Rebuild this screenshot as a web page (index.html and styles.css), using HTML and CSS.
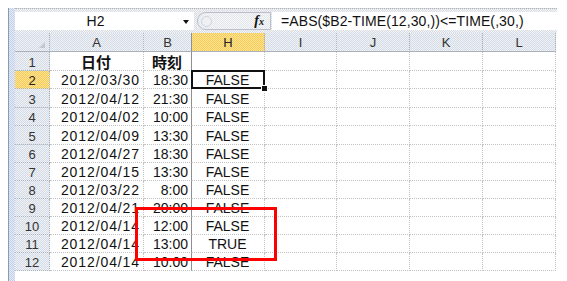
FILE: index.html
```html
<!DOCTYPE html>
<html lang="ja">
<head>
  <meta charset="UTF-8">
  <meta name="viewport" content="width=device-width, initial-scale=1.0">
  <title>ABS と TIME で時刻を判定</title>
  <link rel="stylesheet" href="styles.css">
</head>
<body>
  <div class="window">
    <div class="frame-edge"></div>
    <div class="workbook">
      <div class="formula-bar">
        <div class="name-box">
          <span class="name">H2</span>
          <span class="drop"></span>
        </div>
        <div class="fx-box">
          <span class="btn-dot"></span>
          <span class="fx">f<span class="fx-x">x</span></span>
        </div>
        <div class="formula">=ABS($B2-TIME(12,30,))&lt;=TIME(,30,)</div>
      </div>

      <div class="sheet">
        <div class="hd corner"><span class="tri"></span></div>
        <div class="hd">A</div>
        <div class="hd hidden-after">B</div>
        <div class="hd sel">H</div>
        <div class="hd">I</div>
        <div class="hd">J</div>
        <div class="hd">K</div>
        <div class="hd">L</div>

        <div class="rh">1</div>
        <div class="c mid jp">日付</div>
        <div class="c mid jp hidden-after">時刻</div>
        <div class="c"></div><div class="c"></div><div class="c"></div><div class="c"></div><div class="c"></div>

        <div class="rh sel">2</div>
        <div class="c num date">2012/03/30</div>
        <div class="c num hidden-after">18:30</div>
        <div class="c mid active">FALSE</div>
        <div class="c"></div><div class="c"></div><div class="c"></div><div class="c"></div>

        <div class="rh">3</div>
        <div class="c num date">2012/04/12</div>
        <div class="c num hidden-after">21:30</div>
        <div class="c mid">FALSE</div>
        <div class="c"></div><div class="c"></div><div class="c"></div><div class="c"></div>

        <div class="rh">4</div>
        <div class="c num date">2012/04/02</div>
        <div class="c num hidden-after">10:00</div>
        <div class="c mid">FALSE</div>
        <div class="c"></div><div class="c"></div><div class="c"></div><div class="c"></div>

        <div class="rh">5</div>
        <div class="c num date">2012/04/09</div>
        <div class="c num hidden-after">13:30</div>
        <div class="c mid">FALSE</div>
        <div class="c"></div><div class="c"></div><div class="c"></div><div class="c"></div>

        <div class="rh">6</div>
        <div class="c num date">2012/04/27</div>
        <div class="c num hidden-after">18:30</div>
        <div class="c mid">FALSE</div>
        <div class="c"></div><div class="c"></div><div class="c"></div><div class="c"></div>

        <div class="rh">7</div>
        <div class="c num date">2012/04/15</div>
        <div class="c num hidden-after">13:30</div>
        <div class="c mid">FALSE</div>
        <div class="c"></div><div class="c"></div><div class="c"></div><div class="c"></div>

        <div class="rh">8</div>
        <div class="c num date">2012/03/22</div>
        <div class="c num hidden-after">8:00</div>
        <div class="c mid">FALSE</div>
        <div class="c"></div><div class="c"></div><div class="c"></div><div class="c"></div>

        <div class="rh">9</div>
        <div class="c num date">2012/04/21</div>
        <div class="c num hidden-after">20:00</div>
        <div class="c mid">FALSE</div>
        <div class="c"></div><div class="c"></div><div class="c"></div><div class="c"></div>

        <div class="rh">10</div>
        <div class="c num date">2012/04/14</div>
        <div class="c num hidden-after">12:00</div>
        <div class="c mid">FALSE</div>
        <div class="c"></div><div class="c"></div><div class="c"></div><div class="c"></div>

        <div class="rh">11</div>
        <div class="c num date">2012/04/14</div>
        <div class="c num hidden-after">13:00</div>
        <div class="c mid">TRUE</div>
        <div class="c"></div><div class="c"></div><div class="c"></div><div class="c"></div>

        <div class="rh">12</div>
        <div class="c num date">2012/04/14</div>
        <div class="c num hidden-after">10:00</div>
        <div class="c mid">FALSE</div>
        <div class="c"></div><div class="c"></div><div class="c"></div><div class="c"></div>

        <!-- red highlight over rows 10-11 -->
        <div class="mark"></div>
      </div>
    </div>
  </div>
</body>
</html>
```

FILE: styles.css
```css
body {
  margin: 0;
  background: #fff;
  font-family: "Liberation Sans", Arial, sans-serif;
  color: #111;
}

.window {
  display: flex;
  margin: 8px 0 0 8px;
  height: 273px;
}

/* left window frame, dithered blue */
.frame-edge {
  width: 6px;
  border-left: 1px solid #8a9ab3;
  background: repeating-conic-gradient(#c2d0e8 0 25%, #e4ebf6 0 50%) 0 0 / 2px 2px;
}

.workbook {
  width: 542px;
}

/* formula bar */
.formula-bar {
  display: flex;
  height: 25px;
  box-sizing: border-box;
  padding: 3px 0 3px;
  border-top: 1px dotted #b4b4b4;
  background: repeating-conic-gradient(#d9dde3 0 25%, #f3f4f6 0 50%) 0 0 / 2px 2px;
}
.name-box {
  display: flex;
  align-items: center;
  width: 179px;
  background: #fff;
}
.name {
  width: 161px;
  text-align: center;
  font-size: 14px;
}
.drop {
  width: 0;
  height: 0;
  margin-left: 7px;
  margin-top: 2px;
  border-left: 3px solid transparent;
  border-right: 3px solid transparent;
  border-top: 4px solid #111;
}
.fx-box {
  display: flex;
  align-items: center;
  justify-content: space-between;
  width: 74px;
  margin-left: 3px;
  padding: 0 6px 0 3px;
  box-sizing: border-box;
  border: 1px solid #b9c0cb;
  border-radius: 10px 0 0 10px;
  background: repeating-conic-gradient(#e2e5ea 0 25%, #f6f7f9 0 50%) 0 0 / 2px 2px;
}
.btn-dot {
  width: 9px;
  height: 9px;
  border-radius: 50%;
  border: 1px solid #cdd3dc;
  background: #eef0f3;
}
.fx {
  font-family: "Liberation Serif", serif;
  font-style: italic;
  font-weight: bold;
  font-size: 14px;
  color: #111;
}
.fx-x {
  font-size: 10px;
}
.formula {
  flex: 1;
  margin-left: 1px;
  padding-left: 9px;
  background: #fff;
  font-size: 14px;
  line-height: 19px;
  letter-spacing: 0.1px;
  white-space: nowrap;
}

/* sheet grid */
.sheet {
  position: relative;
  display: grid;
  grid-template-columns: 35px 94px 48px 73px 72px 73px 73px 73px;
  grid-template-rows: 19px 19px 18px 19px 18px 19px 18px 18px 18px 18px 18px 18px 18px 18px;
}
.hd, .rh {
  display: flex;
  align-items: center;
  justify-content: center;
  box-sizing: border-box;
  border-right: 1px dotted #a9b1bd;
  border-bottom: 1px solid #a9b1bd;
  background: repeating-conic-gradient(#d6dce5 0 25%, #eef1f5 0 50%) 0 0 / 2px 2px;
  font-size: 13px;
  color: #333;
}
.rh {
  border-bottom: 1px dotted #a9b1bd;
  padding-top: 2px;
}
.hd.sel, .rh.sel {
  background: repeating-conic-gradient(#f6cb55 0 25%, #fde497 0 50%) 0 0 / 2px 2px;
  color: #222;
}
.corner {
  justify-content: flex-end;
  align-items: flex-end;
  padding: 0 4px 3px 0;
}
.tri {
  width: 0;
  height: 0;
  border-left: 6px solid transparent;
  border-bottom: 6px solid #c3c9d2;
}

.c {
  display: flex;
  align-items: flex-end;
  box-sizing: border-box;
  padding: 0 3px 0 2px;
  border-right: 1px dotted #c3c3c3;
  border-bottom: 1px dotted #c3c3c3;
  font-size: 14px;
  line-height: 16px;
  white-space: nowrap;
}
.c.num {
  justify-content: flex-end;
}
.c.date {
  letter-spacing: 0.9px;
}
.c.mid {
  justify-content: center;
}
.c.jp {
  font-family: "Noto Sans CJK JP", sans-serif;
  font-weight: bold;
  font-size: 15px;
  line-height: 17px;
}
.hidden-after {
  border-right: 1px solid #8f8f8f;
}

/* selected cell H2 */
.active {
  position: relative;
}
.active::after {
  content: "";
  position: absolute;
  left: -1px;
  top: -1px;
  right: -1px;
  bottom: -1px;
  border: 2px solid #111;
}
.active::before {
  content: "";
  position: absolute;
  right: -4px;
  bottom: -4px;
  width: 5px;
  height: 5px;
  background: #111;
  border: 1px solid #fff;
  z-index: 1;
}

.mark {
  position: absolute;
  left: 120px;
  top: 174px;
  width: 142px;
  height: 54px;
  box-sizing: border-box;
  border: 3px solid #f00;
}
```
